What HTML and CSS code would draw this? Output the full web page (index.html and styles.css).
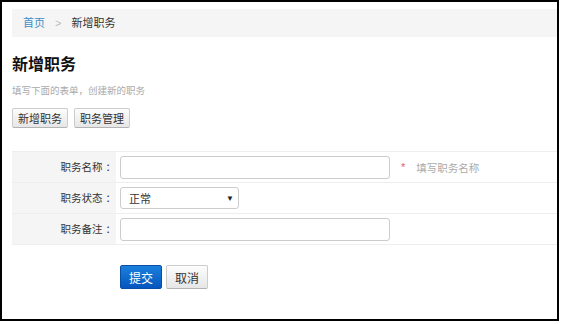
FILE: index.html
```html
<!DOCTYPE html>
<html lang="zh-CN">
<head>
    <meta charset="UTF-8">
    <title>新增职务</title>
    <link rel="stylesheet" href="styles.css">
</head>
<body>
    <div class="frame">
        <div class="breadcrumb">
            <a href="#">首页</a>
            <span class="sep">&gt;</span>
            <span class="current">新增职务</span>
        </div>

        <h1>新增职务</h1>
        <p class="desc">填写下面的表单，创建新的职务</p>

        <div class="tabs">
            <button class="btn">新增职务</button>
            <button class="btn">职务管理</button>
        </div>

        <form class="form">
            <div class="row">
                <label class="label">职务名称<span class="colon">：</span></label>
                <div class="field">
                    <input type="text" class="input">
                    <span class="required">*</span>
                    <span class="hint">填写职务名称</span>
                </div>
            </div>
            <div class="row">
                <label class="label">职务状态<span class="colon">：</span></label>
                <div class="field">
                    <div class="select">
                        <span>正常</span>
                        <span class="arrow">&#9660;</span>
                    </div>
                </div>
            </div>
            <div class="row">
                <label class="label">职务备注<span class="colon">：</span></label>
                <div class="field">
                    <input type="text" class="input">
                </div>
            </div>
        </form>

        <div class="actions">
            <button class="btn btn-primary">提交</button>
            <button class="btn">取消</button>
        </div>
    </div>
</body>
</html>
```

FILE: styles.css
```css
body {
    margin: 0;
    font-family: "Liberation Sans", "Noto Sans CJK SC", sans-serif;
    font-size: 12px;
    color: #333;
    background: #fff;
}
.frame {
    width: 559px;
    height: 321px;
    box-sizing: border-box;
    border: 2px solid #000;
    padding: 7px 0 0 10px;
}
.breadcrumb {
    height: 28px;
    line-height: 28px;
    background-color: #f5f5f5;
    padding-left: 11px;
    font-size: 11px;
}
.breadcrumb a {
    color: #3d8fc9;
    text-decoration: none;
}
.breadcrumb .sep {
    color: #bbb;
    margin: 0 7px;
}
.breadcrumb .current {
    color: #333;
}
h1 {
    margin: 17px 0 0 0;
    font-size: 16px;
    line-height: 22px;
    font-weight: bold;
    color: #111;
}
.desc {
    margin: 8px 0 0 0;
    color: #aaa;
    font-size: 9.5px;
    line-height: 14px;
}
.tabs {
    display: flex;
    gap: 6px;
    margin-top: 10px;
}
.btn {
    font-family: inherit;
    font-size: 11px;
    height: 20px;
    padding: 0 5px;
    color: #333;
    background: linear-gradient(#fdfdfd, #e6e6e6);
    border: 1px solid #ccc;
    border-bottom-color: #b3b3b3;
    border-radius: 2px;
    cursor: pointer;
}
.form {
    margin-top: 23px;
    border-top: 1px solid #eee;
}
.row {
    display: flex;
    height: 31px;
    border-bottom: 1px solid #eee;
    box-sizing: border-box;
}
.label {
    width: 104px;
    background-color: #f5f5f5;
    text-align: right;
    padding-right: 0;
    box-sizing: border-box;
    line-height: 30px;
    font-size: 10.5px;
    color: #333;
}
.colon {
    margin-left: 3px;
}
.field {
    display: flex;
    align-items: center;
    padding-left: 4px;
}
.input {
    width: 270px;
    height: 23px;
    box-sizing: border-box;
    border: 1px solid #ccc;
    border-radius: 3px;
    padding: 0 6px;
}
.required {
    color: #e85b6a;
    margin-left: 11px;
    font-size: 11px;
}
.hint {
    color: #aaa;
    margin-left: 11px;
    font-size: 10.5px;
}
.select {
    width: 119px;
    height: 22px;
    box-sizing: border-box;
    border: 1px solid #ccc;
    border-radius: 3px;
    padding: 0 4px 0 8px;
    display: flex;
    align-items: center;
    justify-content: space-between;
    font-size: 11px;
}
.select .arrow {
    font-size: 8px;
    color: #222;
}
.actions {
    display: flex;
    gap: 4px;
    margin: 20px 0 0 108px;
}
.actions .btn {
    height: 24px;
    padding: 0 8px;
    font-size: 12px;
}
.btn-primary {
    color: #fff;
    background: linear-gradient(#1b80dc, #0556be);
    border-color: #0a4fa6;
}
```
